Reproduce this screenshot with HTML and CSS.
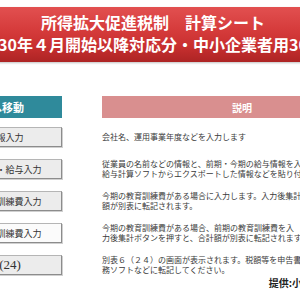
FILE: index.html
```html
<!DOCTYPE html>
<html lang="ja">
<head>
<meta charset="utf-8">
<title>所得拡大促進税制 計算シート</title>
<link rel="stylesheet" href="styles.css">
</head>
<body>
<div class="page">
  <header class="banner">
    <div class="banner-line">所得拡大促進税制　計算シート</div>
    <div class="banner-line">平成30年４月開始以降対応分・中小企業者用30年度</div>
  </header>

  <div class="table">
    <div class="head-row">
      <div class="th th-move">画面へ移動</div>
      <div class="th th-desc">説明</div>
    </div>

    <div class="row">
      <div class="cell-btn"><button class="btn">基本情報入力</button></div>
      <div class="desc">会社名、運用事業年度などを入力します</div>
    </div>
    <div class="row">
      <div class="cell-btn"><button class="btn">従業員情報・給与入力</button></div>
      <div class="desc">従業員の名前などの情報と、前期・今期の給与情報を入力します。<br>給与計算ソフトからエクスポートした情報などを貼り付けることもできます。</div>
    </div>
    <div class="row">
      <div class="cell-btn"><button class="btn">今期の教育訓練費入力</button></div>
      <div class="desc">今期の教育訓練費がある場合に入力します。入力後集計ボタンで合計<br>額が別表に転記されます。</div>
    </div>
    <div class="row">
      <div class="cell-btn"><button class="btn btn-active">前期の教育訓練費入力</button></div>
      <div class="desc">今期の教育訓練費がある場合、前期の教育訓練費を入<br>力後集計ボタンを押すと、合計額が別表に転記されます。</div>
    </div>
    <div class="row row-last">
      <div class="cell-btn"><button class="btn">別表６<span class="num">(24)</span></button></div>
      <div class="desc">別表６（２４）の画面が表示されます。税額等を申告書作成の税<br>務ソフトなどに転記してください。</div>
    </div>
  </div>

  <div class="credit">提供:小林税務会計事務所</div>
</div>
</body>
</html>
```

FILE: styles.css
```css
html, body {
  margin: 0;
  padding: 0;
  background: #ffffff;
  overflow: hidden;
}

body {
  font-family: "Noto Sans CJK JP", "Noto Sans", sans-serif;
  color: #333333;
}

.page {
  width: 476px;
  margin-left: -85px;
  padding-top: 7px;
}

.banner {
  height: 55px;
  box-sizing: border-box;
  padding-top: 4px;
  background: linear-gradient(#e25050 0%, #d63c3c 40%, #c93030 70%, #ad2424 100%);
  box-shadow: 0 1px 2px rgba(0, 0, 0, 0.25);
  color: #ffffff;
  font-weight: bold;
  font-size: 16px;
  line-height: 22px;
}

.banner-line {
  display: flex;
  justify-content: center;
  white-space: nowrap;
}

.table {
  margin-top: 34px;
  padding-left: 16px;
  display: flex;
  flex-direction: column;
}

.head-row {
  display: grid;
  grid-template-columns: 131px 280px;
  column-gap: 40px;
  height: 22px;
  margin-bottom: 9px;
}

.th {
  display: flex;
  align-items: center;
  justify-content: center;
  color: #ffffff;
  font-weight: bold;
  font-size: 11px;
  white-space: nowrap;
}

.th-move {
  background: #2f8a9b;
}

.th-desc {
  background: #d98f8f;
  font-size: 10px;
}

.row {
  display: grid;
  grid-template-columns: 131px 280px;
  column-gap: 40px;
  height: 32px;
  align-content: start;
}

.row-last {
  height: 22px;
}

.cell-btn {
  height: 20px;
}

.btn {
  width: 131px;
  height: 20px;
  padding: 0;
  margin: 0;
  box-sizing: border-box;
  display: flex;
  align-items: center;
  justify-content: center;
  white-space: nowrap;
  font-family: "Noto Sans CJK JP", sans-serif;
  font-size: 9px;
  color: #333333;
  background: #ececec;
  border: 1px solid #b5b5b5;
  border-right-color: #8c8c8c;
  border-bottom-color: #8c8c8c;
  box-shadow: 1px 1px 0 #d0d0d0;
}

.btn-active {
  background: #fbfbfb;
}

.num {
  font-family: "Liberation Serif", serif;
  font-size: 13px;
}

.desc {
  min-height: 20px;
  display: flex;
  align-items: center;
  font-size: 8px;
  line-height: 10px;
  color: #3a3a3a;
  white-space: nowrap;
}

.credit {
  width: 451px;
  padding-left: 16px;
  text-align: right;
  font-size: 10px;
  font-weight: bold;
  color: #222222;
  line-height: 12px;
}
```
